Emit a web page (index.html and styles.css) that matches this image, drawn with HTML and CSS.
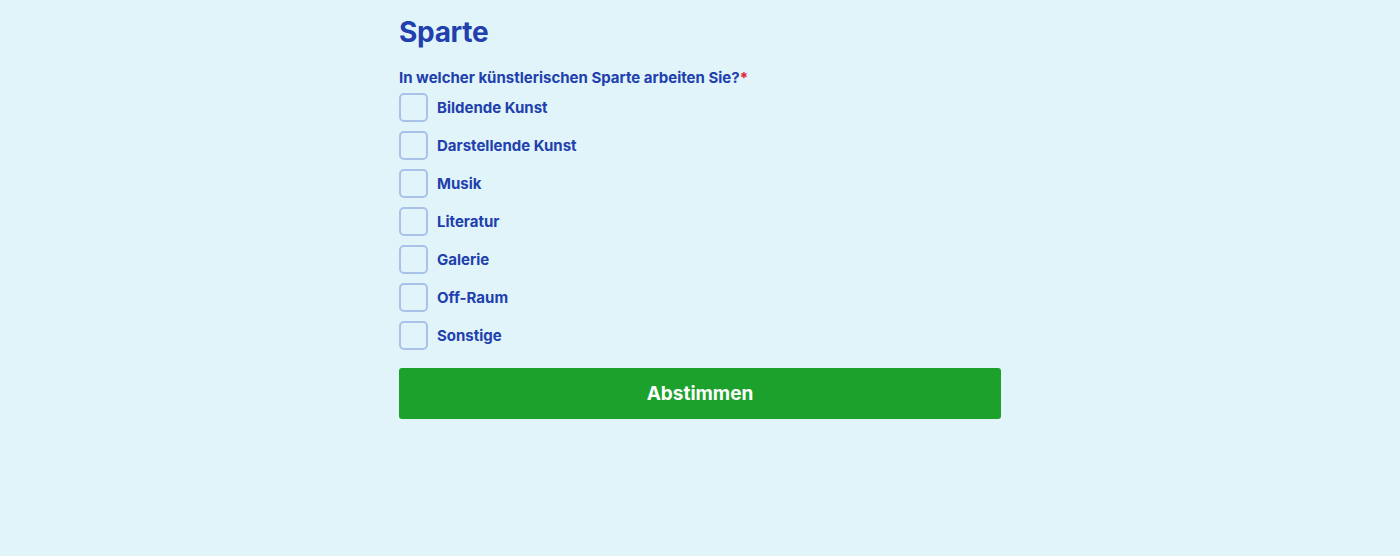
FILE: index.html
```html
<!DOCTYPE html>
<html lang="de">
<head>
<meta charset="utf-8">
<title>Sparte</title>
<link rel="stylesheet" href="styles.css">
</head>
<body>
<main class="form">
  <h2 class="title">Sparte</h2>
  <p class="question">In welcher künstlerischen Sparte arbeiten Sie?<span class="req">*</span></p>
  <ul class="options">
    <li class="option"><span class="box"></span><span class="label">Bildende Kunst</span></li>
    <li class="option"><span class="box"></span><span class="label">Darstellende Kunst</span></li>
    <li class="option"><span class="box"></span><span class="label">Musik</span></li>
    <li class="option"><span class="box"></span><span class="label">Literatur</span></li>
    <li class="option"><span class="box"></span><span class="label">Galerie</span></li>
    <li class="option"><span class="box"></span><span class="label">Off-Raum</span></li>
    <li class="option"><span class="box"></span><span class="label">Sonstige</span></li>
  </ul>
  <button class="submit">Abstimmen</button>
</main>
</body>
</html>
```

FILE: styles.css
```css
html, body {
  margin: 0;
  padding: 0;
  background: #e0f4fa;
  height: 100%;
}
body {
  font-family: "Inter", "Noto Sans", sans-serif;
  color: #2140ad;
}
.form {
  width: 602px;
  margin: 0 auto;
  padding-top: 14px;
  display: flex;
  flex-direction: column;
}
.title {
  margin: 0;
  font-size: 28px;
  font-weight: 700;
  line-height: 36px;
  letter-spacing: -0.3px;
}
.question {
  margin: 18px 0 0;
  font-size: 15px;
  font-weight: 700;
  line-height: 20px;
}
.req {
  color: #e5202a;
}
.options {
  list-style: none;
  margin: 5px 0 0;
  padding: 0;
  display: flex;
  flex-direction: column;
  gap: 9px;
}
.option {
  display: flex;
  align-items: center;
  gap: 9px;
  height: 29px;
}
.box {
  width: 25px;
  height: 25px;
  border: 2px solid #a8c2ea;
  border-radius: 5px;
  box-sizing: content-box;
}
.label {
  font-size: 15px;
  font-weight: 700;
}
.submit {
  margin-top: 18px;
  height: 51px;
  border: 0;
  border-radius: 3px;
  background: #1ca22c;
  color: #fff;
  font-family: "Inter", "Noto Sans", sans-serif;
  font-size: 19px;
  font-weight: 700;
}
```
